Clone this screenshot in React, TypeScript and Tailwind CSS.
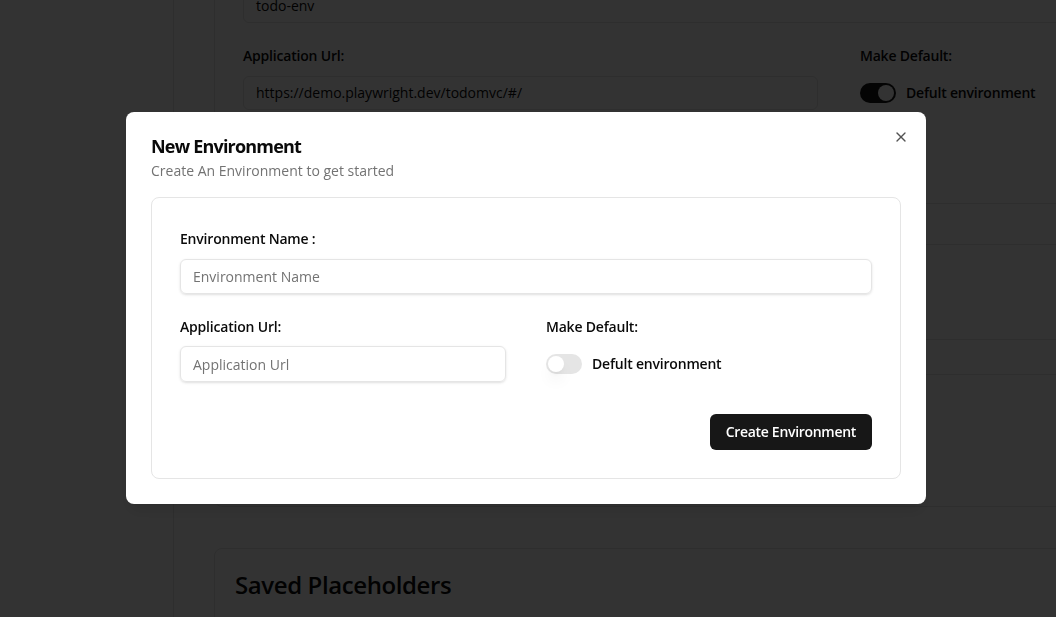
import { X } from "lucide-react";

function BackgroundPage() {
  return (
    <div className="flex h-[617px] w-[1056px] overflow-hidden bg-white text-[#0a0a0a]">
      <aside className="w-[174px] shrink-0 border-r border-[#e5e5e5]" />
      <main className="flex-1 pl-10">
        <section className="-mt-10 w-[1300px] rounded-lg border border-[#e5e5e5] px-7 pt-7 pb-7">
          <div className="flex h-[34px] items-center rounded-md border border-[#e5e5e5] px-3 text-sm">
            todo-env
          </div>
          <div className="mt-[23px] grid grid-cols-[575px_1fr] gap-[42px]">
            <div>
              <p className="text-sm font-semibold leading-5 tracking-[-0.2px]">Application Url:</p>
              <div className="mt-2.5 flex h-[34px] items-center rounded-md border border-[#e5e5e5] px-3 text-sm">
                https://demo.playwright.dev/todomvc/#/
              </div>
            </div>
            <div>
              <p className="text-sm font-semibold leading-5 tracking-[-0.2px]">Make Default:</p>
              <div className="mt-2.5 flex h-[34px] items-center gap-2.5">
                <span className="flex h-5 w-9 items-center justify-end rounded-full bg-[#171717] px-0.5">
                  <span className="h-4 w-4 rounded-full bg-white" />
                </span>
                <span className="text-sm font-semibold tracking-[-0.2px]">Defult environment</span>
              </div>
            </div>
          </div>
          <div className="mt-[93px] h-[41px] border-t border-[#e5e5e5]" />
          <div className="h-[95px] border-t border-[#e5e5e5]" />
          <div className="h-[35px] border-t border-[#e5e5e5]" />
          <div className="h-[104px] border-t border-[#e5e5e5]" />
        </section>
        <section className="mt-[41px] w-[1300px] rounded-lg border border-[#e5e5e5] px-5 pt-5 pb-10">
          <h2 className="text-2xl font-semibold leading-8 tracking-[-0.4px]">Saved Placeholders</h2>
        </section>
      </main>
    </div>
  );
}

function Switch() {
  return (
    <span className="flex h-5 w-9 items-center rounded-full bg-[#e5e5e5] px-0.5">
      <span className="h-4 w-4 rounded-full bg-white shadow-lg" />
    </span>
  );
}

export default function App() {
  return (
    <div
      className="relative h-[617px] w-[1056px] overflow-hidden"
      style={{ fontFamily: '"Open Sans", "Noto Sans", sans-serif' }}
    >
      <BackgroundPage />
      <div className="fixed inset-0 bg-black/80" />
      <div className="fixed left-[126px] top-[112px] w-[800px] rounded-lg bg-white px-[25px] pt-6 pb-[25px] shadow-lg text-[#0a0a0a]">
        <button className="absolute right-[17px] top-[17px] rounded-sm opacity-70">
          <X className="h-4 w-4" />
        </button>
        <div className="pt-px">
          <h1 className="text-lg font-bold leading-[18px] tracking-[-0.8px]">New Environment</h1>
          <p className="mt-1.5 text-sm leading-5 text-[#737373]">
            Create An Environment to get started
          </p>
        </div>
        <div className="mt-4 rounded-lg border border-[#e5e5e5] px-7 pt-[31px] pb-7">
          <label className="block text-sm font-semibold leading-5 tracking-[-0.2px]">Environment Name :</label>
          <input
            className="mt-2.5 h-[35px] w-full rounded-md border border-[#e5e5e5] px-3 text-sm shadow-sm outline-none placeholder:text-[#737373]"
            placeholder="Environment Name"
          />
          <div className="mt-[23px] grid grid-cols-2 gap-10">
            <div>
              <label className="block text-sm font-semibold leading-5 tracking-[-0.2px]">Application Url:</label>
              <input
                className="mt-[9px] h-9 w-full rounded-md border border-[#e5e5e5] px-3 text-sm shadow-sm outline-none placeholder:text-[#737373]"
                placeholder="Application Url"
              />
            </div>
            <div>
              <label className="block text-sm font-semibold leading-5 tracking-[-0.2px]">Make Default:</label>
              <div className="mt-[9px] flex h-9 items-center gap-2.5">
                <Switch />
                <span className="text-sm font-semibold tracking-[-0.2px]">Defult environment</span>
              </div>
            </div>
          </div>
          <div className="mt-8 flex justify-end">
            <button className="h-9 rounded-md bg-[#171717] px-4 text-sm font-semibold tracking-[-0.3px] text-white">
              Create Environment
            </button>
          </div>
        </div>
      </div>
    </div>
  );
}
